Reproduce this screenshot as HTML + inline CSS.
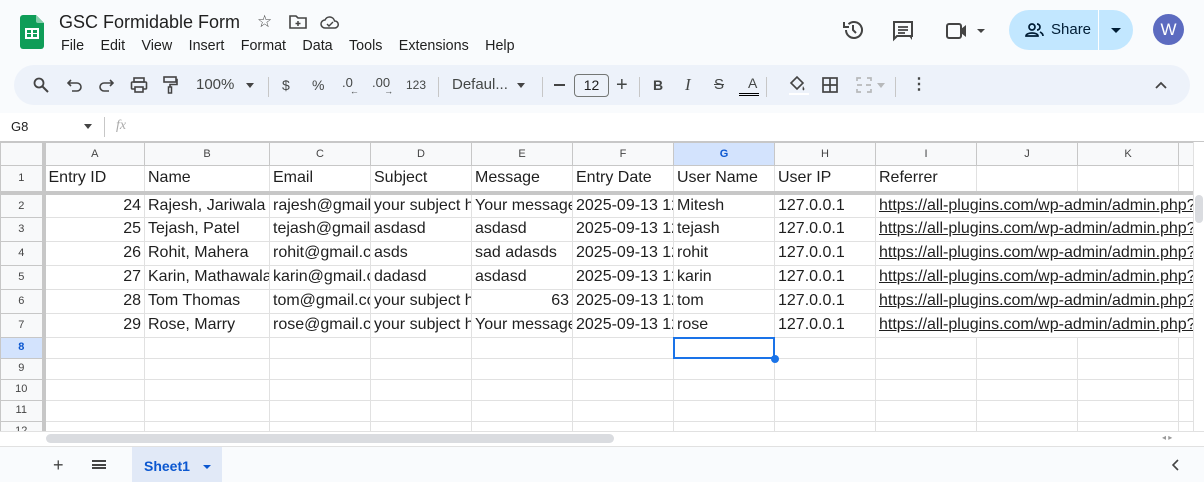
<!DOCTYPE html>
<html><head><meta charset="utf-8"><style>
*{box-sizing:border-box;margin:0;padding:0}
body{width:1204px;height:482px;overflow:hidden;background:#f9fbfd;font-family:"Liberation Sans",Arial,sans-serif;position:relative;color:#1f1f1f}
.abs{position:absolute}
.menu span{margin-right:16.4px}
.tb{position:absolute;left:14px;top:65px;width:1176px;height:40px;background:#edf2fa;border-radius:20px}
.ti{position:absolute;top:0;height:40px;line-height:40px;font-size:14px;color:#444746;text-align:center}
.sep{position:absolute;top:12px;width:1px;height:20px;background:#c7c7c7}
table{position:absolute;left:0;top:142px;width:1194px;border-collapse:collapse;table-layout:fixed;background:#fff}
td{border:1px solid #e1e1e1;overflow:hidden;white-space:nowrap;font-size:16px;padding:0 3px;height:24px;line-height:22px}
tr.h td{background:#f8f9fa;font-size:11px;color:#444;text-align:center;height:23px;border-color:#c7c7c7}
td.rh{background:#f8f9fa;font-size:11px;color:#444;text-align:center;border-right:4px solid #c7c7c7;border-color:#c7c7c7;padding:0}
td.r{text-align:right}
tr.s td{height:21px;line-height:19px}
tr.f td{height:27px}
td.u{text-decoration:underline}
</style></head><body>
<svg class="abs" style="left:20px;top:15px" width="24" height="34" viewBox="0 0 24 34"><path d="M3 0h13l8 8v23a3 3 0 0 1-3 3H3a3 3 0 0 1-3-3V3a3 3 0 0 1 3-3z" fill="#0f9d58"/><path d="M16 0l8 8h-6a2 2 0 0 1-2-2z" fill="#87ceac"/><rect x="5" y="13" width="14" height="11" fill="#fff"/><rect x="7" y="15" width="4" height="3" fill="#0f9d58"/><rect x="13" y="15" width="4" height="3" fill="#0f9d58"/><rect x="7" y="19" width="4" height="3" fill="#0f9d58"/><rect x="13" y="19" width="4" height="3" fill="#0f9d58"/></svg>
<div class="abs" style="left:59px;top:12px;font-size:18px;color:#1f1f1f">GSC Formidable Form</div>
<div class="abs" style="left:257px;top:12px;font-size:17px;color:#444">☆</div>
<svg class="abs" style="left:289px;top:15px" width="18" height="14" viewBox="0 0 18 14"><path d="M1 1h6l2 2h8v10H1z" fill="none" stroke="#444" stroke-width="1.6"/><path d="M9 6v5M6.5 8.5h5" stroke="#444" stroke-width="1.5"/></svg>
<svg class="abs" style="left:320px;top:15px" width="20" height="14" viewBox="0 0 20 14"><path d="M5 13a4 4 0 0 1 0-8 5 5 0 0 1 9.5 1A3.5 3.5 0 0 1 15 13z" fill="none" stroke="#444" stroke-width="1.5"/><path d="M7 9l2 2 4-4" fill="none" stroke="#444" stroke-width="1.4"/></svg>
<div class="abs menu" style="left:61px;top:38px;font-size:14.3px;color:#1f1f1f"><span>File</span><span>Edit</span><span>View</span><span>Insert</span><span>Format</span><span>Data</span><span>Tools</span><span>Extensions</span><span>Help</span></div>
<svg class="abs" style="left:842px;top:19px" width="22" height="22" viewBox="0 0 22 22"><path d="M4 11a8 8 0 1 0 2.5-5.8" fill="none" stroke="#444" stroke-width="2"/><path d="M2 3v5h5" fill="none" stroke="#444" stroke-width="2"/><path d="M11 6v5l3 3" fill="none" stroke="#444" stroke-width="2"/></svg>
<svg class="abs" style="left:892px;top:20px" width="22" height="22" viewBox="0 0 22 22"><path d="M2 2h18v14H5l-3 3z" fill="none" stroke="#444" stroke-width="2"/><path d="M6 7h10M6 10h10M6 13h7" stroke="#444" stroke-width="1.8"/><path d="M17 16l3 4V16z" fill="#444"/></svg>
<svg class="abs" style="left:946px;top:22px" width="42" height="18" viewBox="0 0 42 18"><rect x="1" y="2" width="14" height="14" rx="2" fill="none" stroke="#444" stroke-width="2"/><path d="M15 7l5-4v12l-5-4z" fill="#444"/><path d="M31 7h8l-4 4z" fill="#444"/></svg>
<div class="abs" style="left:1009px;top:10px;width:124px;height:40px;border-radius:20px;background:#c2e7ff"></div>
<div class="abs" style="left:1098px;top:10px;width:1px;height:40px;background:#fff"></div>
<svg class="abs" style="left:1025px;top:22px" width="20" height="16" viewBox="0 0 20 16"><circle cx="7" cy="5" r="3" fill="none" stroke="#001d35" stroke-width="1.7"/><path d="M1 14c0-4 12-4 12 0z" fill="none" stroke="#001d35" stroke-width="1.7"/><path d="M12 2a3 3 0 0 1 0 6M15 10c2 1 3 2 3 4" fill="none" stroke="#001d35" stroke-width="1.7"/></svg>
<div class="abs" style="left:1051px;top:21px;font-size:15px;color:#001d35">Share</div>
<div class="abs" style="left:1111px;top:28px;border-left:5px solid transparent;border-right:5px solid transparent;border-top:5px solid #001d35"></div>
<div class="abs" style="left:1153px;top:14px;width:31px;height:31px;border-radius:50%;background:#5c6bc0;color:#fff;font-size:17px;text-align:center;line-height:31px">W</div>
<div class="tb">
<svg class="abs" style="left:19px;top:12px" width="16" height="16" viewBox="0 0 16 16"><circle cx="6" cy="6" r="4.5" fill="none" stroke="#444" stroke-width="1.8"/><path d="M9.5 9.5L15 15" stroke="#444" stroke-width="2"/></svg>
<svg class="abs" style="left:53px;top:13px" width="16" height="14" viewBox="0 0 16 14"><path d="M4 2L1 5l3 3M1 5h9a4 4 0 0 1 0 8H5" fill="none" stroke="#444" stroke-width="1.6"/></svg>
<svg class="abs" style="left:84px;top:13px" width="16" height="14" viewBox="0 0 16 14"><path d="M12 2l3 3-3 3M15 5H6a4 4 0 0 0 0 8h5" fill="none" stroke="#444" stroke-width="1.6"/></svg>
<svg class="abs" style="left:116px;top:11px" width="18" height="18" viewBox="0 0 18 18"><rect x="4" y="2" width="10" height="4" fill="none" stroke="#444" stroke-width="1.6"/><rect x="1.5" y="6" width="15" height="7" rx="1" fill="none" stroke="#444" stroke-width="1.6"/><rect x="5" y="11" width="8" height="5" fill="#edf2fa" stroke="#444" stroke-width="1.6"/></svg>
<svg class="abs" style="left:148px;top:11px" width="16" height="18" viewBox="0 0 16 18"><rect x="2" y="1" width="12" height="5" fill="none" stroke="#444" stroke-width="1.6"/><path d="M14 3.5h1v5H8v3" fill="none" stroke="#444" stroke-width="1.6"/><rect x="6.5" y="11" width="3" height="6" fill="none" stroke="#444" stroke-width="1.5"/></svg>
<div class="ti" style="left:182px;font-size:15px">100%</div>
<div class="abs" style="left:232px;top:18px;border-left:4px solid transparent;border-right:4px solid transparent;border-top:5px solid #444"></div>
<div class="sep" style="left:254px"></div>
<div class="ti" style="left:268px;font-size:14px">$</div>
<div class="ti" style="left:298px">%</div>
<div class="ti" style="left:328px;font-size:13px;line-height:36px">.0<span style="font-size:9px;position:relative;top:7px;left:-3px">←</span></div>
<div class="ti" style="left:358px;font-size:13px;line-height:36px">.00<span style="font-size:9px;position:relative;top:7px;left:-6px">→</span></div>
<div class="ti" style="left:392px;font-size:12px">123</div>
<div class="sep" style="left:424px"></div>
<div class="ti" style="left:438px;font-size:15px">Defaul...</div>
<div class="abs" style="left:503px;top:18px;border-left:4px solid transparent;border-right:4px solid transparent;border-top:5px solid #444"></div>
<div class="sep" style="left:528px"></div>
<div class="abs" style="left:540px;top:19px;width:11px;height:2px;background:#444"></div>
<div class="abs" style="left:560px;top:9px;width:35px;height:23px;border:1px solid #747775;border-radius:4px;text-align:center;line-height:21px;font-size:14px">12</div>
<div class="ti" style="left:602px;font-size:20px">+</div>
<div class="sep" style="left:625px"></div>
<div class="ti" style="left:639px;font-weight:bold">B</div>
<div class="ti" style="left:671px;font-style:italic;font-family:'Liberation Serif',serif;font-size:17px">I</div>
<div class="ti" style="left:700px;font-size:15px"><s>S</s></div>
<div class="ti" style="left:734px;font-size:14px;line-height:36px">A</div>
<div class="abs" style="left:725px;top:28px;width:20px;height:3px;border-top:1px solid #000;border-bottom:1px solid #000"></div>
<div class="sep" style="left:752px"></div>
<svg class="abs" style="left:774px;top:10px" width="18" height="18" viewBox="0 0 18 18"><path d="M3 8l6-6 6 6-6 6z" fill="none" stroke="#444" stroke-width="1.6"/><path d="M15 11c1 2 2 3 1 4s-2 0-1-4" fill="#444"/></svg>
<div class="abs" style="left:775px;top:28px;width:20px;height:2px;background:#fff"></div>
<svg class="abs" style="left:808px;top:12px" width="16" height="16" viewBox="0 0 16 16"><rect x="1" y="1" width="14" height="14" fill="none" stroke="#444" stroke-width="1.7"/><path d="M8 1v14M1 8h14" stroke="#444" stroke-width="1.7"/></svg>
<svg class="abs" style="left:842px;top:12px" width="16" height="16" viewBox="0 0 16 16"><path d="M1 4V1h4M11 1h4v3M1 12v3h4M11 15h4v-3M1 8h5M15 8h-5" fill="none" stroke="#b7b9bb" stroke-width="1.7"/></svg>
<div class="abs" style="left:863px;top:18px;border-left:4px solid transparent;border-right:4px solid transparent;border-top:5px solid #b7b9bb"></div>
<div class="sep" style="left:881px"></div>
<div class="ti" style="left:897px;font-size:16px;font-weight:bold">⋮</div>
<svg class="abs" style="left:1141px;top:16px" width="12" height="8" viewBox="0 0 12 8"><path d="M1 7l5-5 5 5" fill="none" stroke="#444" stroke-width="1.8"/></svg>
</div>
<div class="abs" style="left:0;top:113px;width:1204px;height:29px;background:#fff;border-bottom:1px solid #c7c7c7"></div>
<div class="abs" style="left:11px;top:119px;font-size:13px">G8</div>
<div class="abs" style="left:84px;top:124px;border-left:4px solid transparent;border-right:4px solid transparent;border-top:5px solid #444"></div>
<div class="abs" style="left:104px;top:117px;width:1px;height:20px;background:#c7c7c7"></div>
<div class="abs" style="left:116px;top:118px;font-size:14px;font-style:italic;color:#aaa;font-family:'Liberation Serif',serif">fx</div>
<table>
<colgroup><col style="width:43px"><col style="width:101px"><col style="width:125px"><col style="width:101px"><col style="width:101px"><col style="width:101px"><col style="width:101px"><col style="width:101px"><col style="width:101px"><col style="width:101px"><col style="width:101px"><col style="width:101px"><col style="width:16px"></colgroup>
<tr class="h"><td style="border-right:4px solid #c7c7c7"></td><td>A</td><td>B</td><td>C</td><td>D</td><td>E</td><td>F</td><td style="background:#d3e3fd;color:#0b57d0;font-weight:bold">G</td><td>H</td><td>I</td><td>J</td><td>K</td><td></td></tr>
<tr class="f" style="border-bottom:4px solid #c7c7c7"><td class="rh">1</td><td>Entry ID</td><td>Name</td><td>Email</td><td>Subject</td><td>Message</td><td>Entry Date</td><td>User Name</td><td>User IP</td><td>Referrer</td><td></td><td></td><td></td></tr>
<tr><td class="rh">2</td><td class="r">24</td><td>Rajesh, Jariwala</td><td>rajesh@gmail.com</td><td>your subject here</td><td>Your message</td><td>2025-09-13 12:00</td><td>Mitesh</td><td>127.0.0.1</td><td class="u" colspan="4">https://all-plugins.com/wp-admin/admin.php?page</td></tr>
<tr><td class="rh">3</td><td class="r">25</td><td>Tejash, Patel</td><td>tejash@gmail.com</td><td>asdasd</td><td>asdasd</td><td>2025-09-13 12:00</td><td>tejash</td><td>127.0.0.1</td><td class="u" colspan="4">https://all-plugins.com/wp-admin/admin.php?page</td></tr>
<tr><td class="rh">4</td><td class="r">26</td><td>Rohit, Mahera</td><td>rohit@gmail.com</td><td>asds</td><td>sad adasds</td><td>2025-09-13 12:00</td><td>rohit</td><td>127.0.0.1</td><td class="u" colspan="4">https://all-plugins.com/wp-admin/admin.php?page</td></tr>
<tr><td class="rh">5</td><td class="r">27</td><td>Karin, Mathawala</td><td>karin@gmail.com</td><td>dadasd</td><td>asdasd</td><td>2025-09-13 12:00</td><td>karin</td><td>127.0.0.1</td><td class="u" colspan="4">https://all-plugins.com/wp-admin/admin.php?page</td></tr>
<tr><td class="rh">6</td><td class="r">28</td><td>Tom Thomas</td><td>tom@gmail.com</td><td>your subject here</td><td class="r">63</td><td>2025-09-13 12:00</td><td>tom</td><td>127.0.0.1</td><td class="u" colspan="4">https://all-plugins.com/wp-admin/admin.php?page</td></tr>
<tr><td class="rh">7</td><td class="r">29</td><td>Rose, Marry</td><td>rose@gmail.com</td><td>your subject here</td><td>Your message</td><td>2025-09-13 12:00</td><td>rose</td><td>127.0.0.1</td><td class="u" colspan="4">https://all-plugins.com/wp-admin/admin.php?page</td></tr>
<tr class="s"><td class="rh" style="background:#d3e3fd;color:#0b57d0;font-weight:bold">8</td><td></td><td></td><td></td><td></td><td></td><td></td><td></td><td></td><td></td><td></td><td></td><td></td></tr>
<tr class="s"><td class="rh">9</td><td></td><td></td><td></td><td></td><td></td><td></td><td></td><td></td><td></td><td></td><td></td><td></td></tr>
<tr class="s"><td class="rh">10</td><td></td><td></td><td></td><td></td><td></td><td></td><td></td><td></td><td></td><td></td><td></td><td></td></tr>
<tr class="s"><td class="rh">11</td><td></td><td></td><td></td><td></td><td></td><td></td><td></td><td></td><td></td><td></td><td></td><td></td></tr>
<tr class="s"><td class="rh">12</td><td></td><td></td><td></td><td></td><td></td><td></td><td></td><td></td><td></td><td></td><td></td><td></td></tr>
</table>
<div class="abs" style="left:673px;top:337px;width:102px;height:22px;border:2px solid #1a73e8"></div>
<div class="abs" style="left:771px;top:355px;width:8px;height:8px;border-radius:50%;background:#1a73e8"></div>
<div class="abs" style="left:1193px;top:142px;width:11px;height:290px;background:#fff;border-left:1px solid #e1e1e1"></div>
<div class="abs" style="left:1195px;top:195px;width:8px;height:28px;border-radius:4px;background:#dadce0"></div>
<div class="abs" style="left:0;top:431px;width:1204px;height:15px;background:#fff;border-top:1px solid #e1e1e1"></div>
<div class="abs" style="left:46px;top:434px;width:568px;height:9px;border-radius:5px;background:#dadce0"></div>
<div class="abs" style="left:1162px;top:433px;font-size:8px;color:#999">◂ ▸</div>
<div class="abs" style="left:0;top:446px;width:1204px;height:36px;background:#f9fbfd;border-top:1px solid #e1e1e1"></div>
<div class="abs" style="left:53px;top:455px;font-size:18px;color:#444">+</div>
<div class="abs" style="left:92px;top:460px;width:14px;height:9px;border-top:2px solid #444;border-bottom:2px solid #444"></div>
<div class="abs" style="left:92px;top:464px;width:14px;height:2px;background:#444"></div>
<div class="abs" style="left:132px;top:447px;width:90px;height:35px;background:#e1e9f7"></div>
<div class="abs" style="left:144px;top:458px;font-size:14px;color:#0b57d0;font-weight:bold">Sheet1</div>
<div class="abs" style="left:203px;top:465px;border-left:4px solid transparent;border-right:4px solid transparent;border-top:4px solid #0b57d0"></div>
<svg class="abs" style="left:1172px;top:459px" width="8" height="12" viewBox="0 0 8 12"><path d="M6 1L1 6l5 5" fill="none" stroke="#444" stroke-width="1.6"/></svg>
</body></html>
